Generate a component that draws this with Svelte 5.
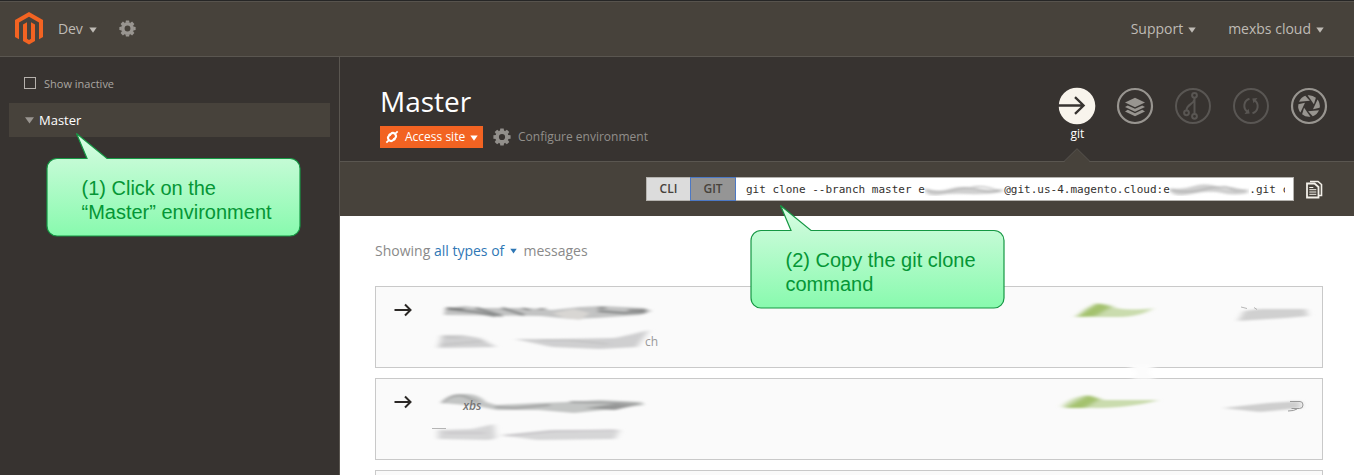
<script>
  const teeth = [0, 45, 90, 135, 180, 225, 270, 315];
  const blades = [0, 60, 120, 180, 240, 300];
  const steps = [
    { lines: ['(1) Click on the', '“Master” environment'], left: 46, top: 132 },
    { lines: ['(2) Copy the git clone', 'command'], left: 750, top: 204 }
  ];
</script>

{#snippet gear(size)}
  <svg class="gear" width={size} height={size} viewBox="0 0 18 18">
    <circle cx="9" cy="9" r="4.9" fill="none" stroke="currentColor" stroke-width="3.6" />
    {#each teeth as a}
      <path d="M6.900 3 7.300 .4h3.400L11.100 3z" fill="currentColor" transform="rotate({a} 9 9)" />
    {/each}
  </svg>
{/snippet}

{#snippet caret()}
  <svg class="caret" width="8" height="6" viewBox="0 0 8 6"><path d="M.3.5h7.4L4 5.800z" fill="currentColor" /></svg>
{/snippet}

{#snippet arrow()}
  <svg class="arrow" width="20" height="16" viewBox="0 0 20 16">
    <path d="M1.500 8h16M12 2.500 17.500 8 12 13.500" fill="none" stroke="#2b2826" stroke-width="2" />
  </svg>
{/snippet}

<div class="page">
  <header>
    <div class="left">
      <svg class="logo" width="28" height="33" viewBox="0 0 28 33">
        <path fill="#f26322" d="M14 0 28 8v17l-4 2.200V10.400L14 4.700 4 10.400v16.800L0 25V8z" />
        <path fill="#f26322" d="M8 12.600l4-2.300v16.500l2 1.200 2-1.200V10.300l4 2.300V29l-6 3.500L8 29z" />
      </svg>
      <span class="dev">Dev</span>{@render caret()}
      <span class="settings">{@render gear(17)}</span>
    </div>
    <div class="right">
      <span>Support</span>{@render caret()}
      <span class="account">mexbs cloud</span>{@render caret()}
    </div>
  </header>

  <div class="body">
    <aside>
      <div class="inactive"><i></i><span>Show inactive</span></div>
      <div class="tree">
        <svg width="9" height="7" viewBox="0 0 9 7"><path d="M0 .3h9L4.500 6.500z" fill="#999590" /></svg>
        <span>Master</span>
      </div>
    </aside>

    <main>
      <section class="env">
        <div class="title">
          <h1>Master</h1>
          <div class="actions">
            <div class="access">
              <svg width="14" height="14" viewBox="0 0 14 14" fill="none" stroke="#fff">
                <g transform="rotate(-45 7 7)">
                  <rect x="2.700" y="4" width="8.600" height="6" rx="3" stroke-width="2" />
                  <path d="M-1 7h4M11 7h4M7 2.500v2.500M7 9v2.500" stroke-width="1.700" />
                </g>
              </svg>
              <span>Access site</span>{@render caret()}
            </div>
            <div class="configure">{@render gear(18)}<span>Configure environment</span></div>
          </div>
        </div>
        <nav>
          <div class="tool">
            <svg width="38" height="38" viewBox="0 0 38 38">
              <circle cx="19" cy="19" r="18.300" fill="#f8f4ec" />
              <path d="M0 18.500h26M17 10.200l8.600 8.300-8.600 8.300" fill="none" stroke="#373330" stroke-width="2.300" />
            </svg>
            <span>git</span>
          </div>
          <div class="tool">
            <svg width="38" height="38" viewBox="0 0 38 38">
              <circle cx="19" cy="19" r="17" fill="none" stroke="#989590" stroke-width="2.200" />
              <path fill="#989590" d="M19 10.700l10 4.800-10 4.700-10-4.700z" />
              <path fill="#989590" d="M9 20l2.800-1.600L19 21.800l7.200-3.400L29 20l-10 4.800zM9 24.400l2.800-1.600 7.200 3.400 7.200-3.400 2.800 1.600-10 4.800z" />
            </svg>
          </div>
          <div class="tool">
            <svg width="38" height="38" viewBox="0 0 38 38" fill="none" stroke="#595653" stroke-width="2">
              <circle cx="19" cy="19" r="17" />
              <circle cx="20.500" cy="8.300" r="2.400" />
              <circle cx="12.500" cy="25.800" r="2.400" />
              <circle cx="20.500" cy="29.300" r="2.400" />
              <path d="M20.500 11v16M20.300 12.500c-.5 5-7.500 4.500-7.800 10.700" />
            </svg>
          </div>
          <div class="tool">
            <svg width="38" height="38" viewBox="0 0 38 38" fill="none" stroke="#595653" stroke-width="2">
              <circle cx="19" cy="19" r="17" />
              <path d="M17.500 11.800a7.300 7.300 0 0 0-2 13M20.500 26.200a7.300 7.300 0 0 0 2-13" />
              <path d="M20.300 11.400 25.500 11 21.500 16.200zM17.700 26.600 12.500 27 16.500 21.800z" fill="#595653" stroke="none" />
            </svg>
          </div>
          <div class="tool">
            <svg width="38" height="38" viewBox="0 0 38 38">
              <circle cx="19" cy="19" r="17" fill="none" stroke="#989590" stroke-width="2.200" />
              {#each blades as a}
                <path d="M17.600 8.300a10.800 10.800 0 0 1 8.300 2.400l-2 6.500z" fill="#989590" transform="rotate({a} 19 19)" />
              {/each}
            </svg>
          </div>
        </nav>
      </section>

      <section class="clone">
        <svg class="notch" width="28" height="14" viewBox="0 0 28 14">
          <path d="M1 14 14 1l13 13z" fill="#47423b" />
          <path d="M1 13.500 14 .7l13 12.800" fill="none" stroke="#5a5650" />
        </svg>
        <div class="field">
          <div class="seg cli">CLI</div>
          <div class="seg git">GIT</div>
          <div class="cmd">
            git clone --branch master e<svg class="hidden-id" width="79.440" height="14" viewBox="0 0 79.440 14">
              <g filter="url(#soft)">
                <path d="M0 6q12 5 24 1t25-1 28 1v3q-18 3-34 2t-28 1T0 9z" fill="#cfcfcf" />
                <path d="M0 8q15 4 29 0t26 0 22 0M47 5q14-2 26 4" fill="none" stroke="#a8a8a8" />
              </g>
            </svg>@git.us-4.magento.cloud:e<svg class="hidden-id" width="79.440" height="14" viewBox="0 0 79.440 14">
              <g filter="url(#soft)">
                <path d="M0 6q12 2 24-2t25 1 29 2v4q-14 3-26 0t-30 1T0 9z" fill="#cfcfcf" />
                <path d="M0 8q20 4 35-1t40 2M54 4l14 6" fill="none" stroke="#a0a0a0" />
              </g>
            </svg>.git c
          </div>
        </div>
        <svg class="copy" width="17" height="19" viewBox="0 0 17 19">
          <path d="M4 1.500h8L15.500 4.500V15.500H13" fill="none" stroke="#f3f0e9" stroke-width="1.600" />
          <path d="M1 3.500h7.500L12.500 7V17.500H1z" fill="#47423b" stroke="#f3f0e9" stroke-width="1.800" />
          <path d="M3.300 7.500h4M3.300 9.700h7M3.300 12h7M3.300 14.300h7" stroke="#f3f0e9" />
        </svg>
      </section>

      <section class="feed">
        <p>Showing <span class="types">all types of {@render caret()}</span> messages</p>
        <article>
          {@render arrow()}
          <svg class="smear" width="900" height="80" viewBox="0 0 900 80">
            <g filter="url(#soft)">
              <path d="M25 21l20-2 17 2 18 0 28 0 24 2 28-3 22-1 42 2 8 3-12 4-44 3-25 1-30-3-97-1z" fill="#c2c3c3" />
              <path d="M28 22l28 3 20 4M56 21l26 8M178 24l26 2 22-1M82 21l22 7" fill="none" stroke="#8b8d8d" stroke-width="2.500" />
              <path d="M26 21l18 1M102 21l8 2M118 22l8 0M178 21l8 0M208 23l18 0" fill="none" stroke="#555" />
              <path d="M133 26l20-4 17 4-10 7-16-2z" fill="#d8d6d3" />
            </g>
            <g filter="url(#haze)">
              <path d="M22 48l20 0 18 3 16 9-58 1zM95 52l40 0 60-1 18-4 16-4-12 17-37 2-48-2z" fill="#cfcfd0" />
              <path d="M22 50l18 1M20 58l44-4M120 53l28 0 40 4" fill="none" stroke="#bbb" />
              <path d="M657 30q8-10 20-13 12-1 18 4 19 3 38 0-10 8-30 9l-46 0z" fill="#cadcae" />
              <path d="M656 30l20-1 15-9-14-4z" fill="#a4c26e" />
              <path d="M824 24l15-2 47 0 2 7-22 2-48 3z" fill="#d0d0d0" />
            </g>
            <path d="M821 20l6 1.500M834 20.500l3 2" stroke="#999" opacity=".7" />
            <text x="225" y="59">ch</text>
          </svg>
        </article>
        <article>
          {@render arrow()}
          <svg class="smear" width="900" height="80" viewBox="0 0 900 80">
            <g filter="url(#soft)">
              <path d="M22 24q6-8 22-9 14-1 22 8l10 3 42-2 30-1 32-2 42 2 2 3-30 4-40 4-35-3-42 0-20-4z" fill="#c3c5c4" />
              <path d="M22 24q10-10 22-7l14 6M75 28l20 1 35-3M150 23l48 1 20 1" fill="none" stroke="#a0a1a1" stroke-width="2" />
              <path d="M165 29l30-4 20 1-20 5z" fill="#959696" />
            </g>
            <g filter="url(#haze)">
              <path d="M18 51l34-1 22-5 2 14-6 2-52-1zM80 56l50-5 70 0-5 9-78 1z" fill="#d6d6d7" />
              <path d="M25 54l40 0M85 57l50-5 61-1" fill="none" stroke="#bebabf" />
              <path d="M642 28q8-10 26-12l15 5q30 0 55 0-22 7-60 8z" fill="#cadcae" />
              <path d="M645 29l20 0 15-9-12-4z" fill="#a4c26e" />
              <path d="M803 29l45-5 32-2 1 7-41 4z" fill="#cecece" />
            </g>
            <path d="M12 49.500h14" stroke="#999" opacity=".7" />
            <text class="strong" x="43" y="31">xbs</text>
            <path d="M870 22.500h10q3 0 3 3.500t-3.500 3.500h-8M868 32q6 0 9-2" fill="none" stroke="#999" />
          </svg>
        </article>
        <article></article>
        <svg class="wipe" width="40" height="20" viewBox="0 0 40 20">
          <path d="M6 2h28L26 9l7 7H10l5-6z" fill="#fcfcfc" filter="url(#haze)" />
        </svg>
      </section>
    </main>
  </div>

  {#each steps as step}
    <div class="callout" style="left:{step.left}px;top:{step.top}px">
      <svg width="255" height="106" viewBox="0 0 255 106">
        <defs>
          <linearGradient id="mint" x1="0" y1="0" x2="0" y2="1">
            <stop offset="0" stop-color="#dcffe7" />
            <stop offset=".25" stop-color="#c4fbd5" />
            <stop offset="1" stop-color="#88faae" />
          </linearGradient>
        </defs>
        <path d="M11 26.500H41L30.500 1.500 61 26.500H244a10 10 0 0 1 10 10V94a10 10 0 0 1-10 10H11A10 10 0 0 1 1 94V36.500a10 10 0 0 1 10-10z" fill="url(#mint)" stroke="#159743" stroke-width="1.200" />
      </svg>
      <p>{step.lines[0]}<br />{step.lines[1]}</p>
    </div>
  {/each}

  <svg class="defs" width="0" height="0">
    <filter id="soft" x="-20%" y="-80%" width="140%" height="260%"><feGaussianBlur stdDeviation="2 .8" /></filter>
    <filter id="haze" x="-20%" y="-80%" width="140%" height="260%"><feGaussianBlur stdDeviation="3 1.200" /></filter>
  </svg>
</div>

<style>
  :global(body) { margin: 0; overflow: hidden; }
  * { box-sizing: border-box; }
  svg { display: block; flex: none; }
  .page {
    position: relative; width: 1354px; height: 475px; overflow: hidden;
    display: flex; flex-direction: column; background: #373330;
    font-family: "Open Sans", "Noto Sans", sans-serif;
  }
  header {
    height: 57px; flex: none; display: flex; justify-content: space-between;
    background: #47423b; border-top: 1px solid #262626; border-bottom: 1px solid #5a5650;
    box-shadow: inset 0 1px #57534d; padding: 0 30px 0 15px;
    color: #bfbbb5; font-size: 14px;
  }
  .left, .right { display: flex; align-items: center; }
  .logo { margin-right: 15px; }
  .dev { letter-spacing: -0.15px; }
  .caret { margin: 2px 0 0 6px; }
  .right .caret { margin-left: 5px; }
  .settings { margin-left: 22px; color: #999590; }
  .account { margin-left: 32px; }
  .body { flex: 1; display: flex; min-height: 0; }
  aside { width: 340px; flex: none; border-right: 1px solid #5a5650; padding: 17px 9px 0; }
  .inactive { display: flex; align-items: center; height: 18px; margin-left: 15px; color: #aaa6a1; font-size: 11px; }
  .inactive i { width: 12px; height: 12px; border: 1px solid #b5b1ac; margin-right: 8px; }
  .tree {
    margin-top: 11px; height: 34px; width: 321px; background: #47423b; display: flex; align-items: center;
    padding-left: 16px; color: #fff; font-size: 13px; font-weight: 500;
  }
  .tree span { margin-left: 5px; }
  main { flex: 1; min-width: 0; display: flex; flex-direction: column; }
  .env { height: 104px; flex: none; display: flex; justify-content: space-between; padding: 0 25.600px 0 40px; }
  h1 { margin: 25px 0 0; font-size: 28px; font-weight: 400; line-height: 38px; color: #fff; }
  .actions { display: flex; align-items: center; margin-top: 6px; height: 22px; }
  .access { display: flex; align-items: center; height: 22px; width: 103px; background: #f26322; color: #fff; font-size: 12px; padding-left: 5px; }
  .access span { margin: -2px 0 0 6px; }
  .access .caret { margin-left: 5px; }
  .configure { display: flex; align-items: center; margin-left: 10px; color: #928f8b; font-size: 12px; }
  .configure span { margin: -2px 0 0 7px; }
  nav { display: flex; gap: 20px; padding-top: 30px; }
  .tool { display: flex; flex-direction: column; align-items: center; color: #fff; font-size: 12px; }
  .tool span { line-height: 18px; }
  .clone {
    position: relative; height: 55px; flex: none; background: #47423b; border-top: 1px solid #5a5650;
    display: flex; align-items: center; justify-content: flex-end; padding-right: 31px;
  }
  .notch { position: absolute; left: 723px; top: -14px; }
  .field { display: flex; width: 648px; height: 24px; background: #fff; border: 1px solid #b5b3af; }
  .seg { display: flex; align-items: center; justify-content: center; height: 22px; color: #47423b; font-size: 12px; font-weight: 600; padding-bottom: 1px; }
  .cli { width: 43px; background: #dcdcdc; }
  .git { width: 46px; height: 24px; margin-top: -1px; background: #959595; border: 1px solid #4c78c4; }
  .cmd {
    flex: 1; display: flex; align-items: center; margin: 0 8px 0 10px; overflow: hidden; white-space: pre;
    white-space-collapse: collapse; text-wrap: nowrap; color: #33302e; font: 11px "DejaVu Sans Mono", monospace;
  }
  .copy { margin-left: 12px; }
  .feed { position: relative; flex: 1; min-height: 0; background: #fff; padding: 0 31px 0 35px; }
  .feed p { display: flex; align-items: center; margin: 24px 0 26px; height: 20px; font-size: 14px; color: #8a8a8a; white-space: pre; }
  .types { display: flex; align-items: center; color: #2f77b5; }
  .types .caret { margin: 2px 3px 0 2px; width: 7px; }
  article { height: 82px; display: flex; background: #fafafa; border: 1px solid #c9c9c9; margin-bottom: 10px; }
  .arrow { margin: 15px 0 0 17px; }
  .smear { margin-left: 7px; }
  .smear text { font: 12px "Open Sans", sans-serif; fill: #999; }
  .smear .strong { font-size: 12px; font-weight: 600; font-style: italic; fill: #777; }
  .wipe { position: absolute; left: 782px; top: 147px; }
  .callout { position: absolute; }
  .callout p {
    position: absolute; left: 35.500px; top: 44px; margin: 0; white-space: nowrap; color: #059636;
    font: 20px/24px "Liberation Sans", Arial, sans-serif;
  }
  .defs { position: absolute; }
</style>
